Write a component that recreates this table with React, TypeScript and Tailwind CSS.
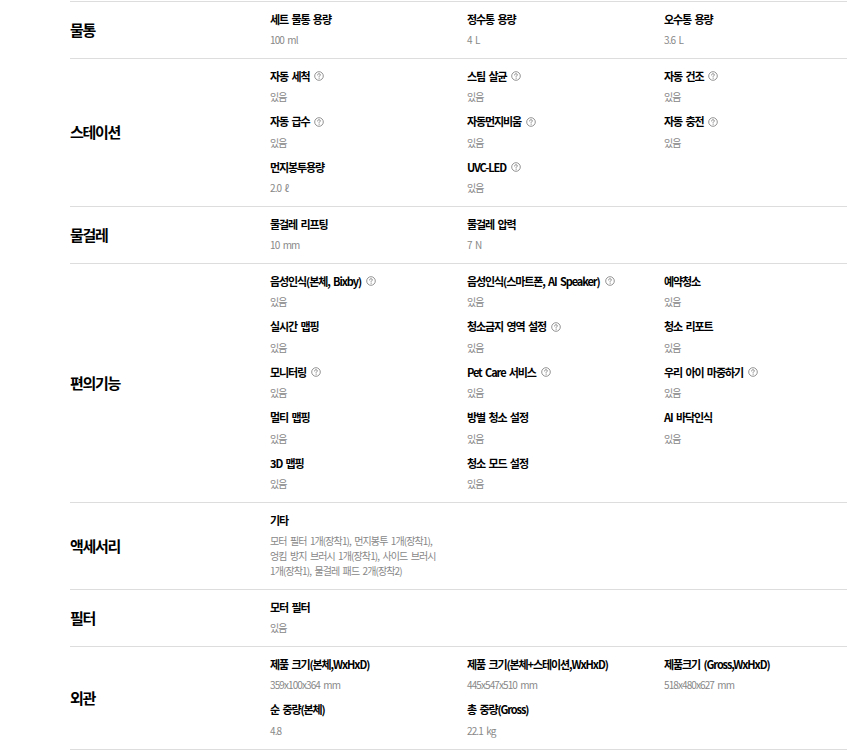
const font = { fontFamily: '"Noto Sans CJK KR", "Noto Sans", sans-serif' };

type Spec = { title: string; value: string; help?: boolean };

const sections: { label: string; items: Spec[] }[] = [
  {
    label: "물통",
    items: [
      { title: "세트 물통 용량", value: "100 ml" },
      { title: "정수통 용량", value: "4 L" },
      { title: "오수통 용량", value: "3.6 L" },
    ],
  },
  {
    label: "스테이션",
    items: [
      { title: "자동 세척", value: "있음", help: true },
      { title: "스팀 살균", value: "있음", help: true },
      { title: "자동 건조", value: "있음", help: true },
      { title: "자동 급수", value: "있음", help: true },
      { title: "자동먼지비움", value: "있음", help: true },
      { title: "자동 충전", value: "있음", help: true },
      { title: "먼지봉투용량", value: "2.0 ℓ" },
      { title: "UVC-LED", value: "있음", help: true },
    ],
  },
  {
    label: "물걸레",
    items: [
      { title: "물걸레 리프팅", value: "10 mm" },
      { title: "물걸레 압력", value: "7 N" },
    ],
  },
  {
    label: "편의기능",
    items: [
      { title: "음성인식(본체, Bixby)", value: "있음", help: true },
      { title: "음성인식(스마트폰, AI Speaker)", value: "있음", help: true },
      { title: "예약청소", value: "있음" },
      { title: "실시간 맵핑", value: "있음" },
      { title: "청소금지 영역 설정", value: "있음", help: true },
      { title: "청소 리포트", value: "있음" },
      { title: "모니터링", value: "있음", help: true },
      { title: "Pet Care 서비스", value: "있음", help: true },
      { title: "우리 아이 마중하기", value: "있음", help: true },
      { title: "멀티 맵핑", value: "있음" },
      { title: "방별 청소 설정", value: "있음" },
      { title: "AI 바닥인식", value: "있음" },
      { title: "3D 맵핑", value: "있음" },
      { title: "청소 모드 설정", value: "있음" },
    ],
  },
  {
    label: "액세서리",
    items: [
      {
        title: "기타",
        value:
          "모터 필터 1개(장착1), 먼지봉투 1개(장착1),\n엉킴 방지 브러시 1개(장착1), 사이드 브러시\n1개(장착1), 물걸레 패드 2개(장착2)",
      },
    ],
  },
  {
    label: "필터",
    items: [{ title: "모터 필터", value: "있음" }],
  },
  {
    label: "외관",
    items: [
      { title: "제품 크기(본체,WxHxD)", value: "359x100x364 mm" },
      { title: "제품 크기(본체+스테이션,WxHxD)", value: "445x547x510 mm" },
      { title: "제품크기 (Gross,WxHxD)", value: "518x480x627 mm" },
      { title: "순 중량(본체)", value: "4.8" },
      { title: "총 중량(Gross)", value: "22.1 kg" },
    ],
  },
];

const HelpIcon = () => (
  <svg width="10" height="10" viewBox="0 0 10 10" className="ml-[5px] shrink-0">
    <circle cx="5" cy="5" r="4.3" fill="none" stroke="#777" strokeWidth="0.8" />
    <path
      d="M3.6 4 C3.6 3.1 4.2 2.7 5 2.7 C5.8 2.7 6.4 3.2 6.4 3.9 C6.4 4.7 5.3 4.8 5.1 5.6 L5.1 6"
      fill="none"
      stroke="#777"
      strokeWidth="0.8"
      strokeLinecap="round"
    />
    <circle cx="5.1" cy="7.3" r="0.5" fill="#777" />
  </svg>
);

const SpecItem = ({ title, value, help }: Spec) => (
  <div className="flex flex-col">
    <div className="flex items-center h-[18px] text-[11px] font-bold text-black tracking-[-1.1px] [word-spacing:2px] whitespace-pre">
      {title}
      {help && <HelpIcon />}
    </div>
    <div className="mt-[4px] text-[10px] leading-[15px] text-[#888] tracking-[-0.9px] [word-spacing:2px] whitespace-pre">
      {value}
    </div>
  </div>
);

export default function App() {
  return (
    <div className="w-[847px] min-h-[753px] bg-white overflow-hidden pt-px" style={font}>
      <div className="ml-[70px] border-t border-[#ddd]">
        {sections.map((s) => (
          <div key={s.label} className="flex border-b border-[#ddd]">
            <div className="w-[200px] shrink-0 flex items-center">
              <h3 className="text-[15px] font-bold text-black tracking-[-1.3px]">{s.label}</h3>
            </div>
            <div className="grid grid-cols-[197px_197px_197px] gap-y-[8.5px] pt-[8px] pb-[11px]">
              {s.items.map((it) => (
                <SpecItem key={it.title} {...it} />
              ))}
            </div>
          </div>
        ))}
      </div>
    </div>
  );
}
